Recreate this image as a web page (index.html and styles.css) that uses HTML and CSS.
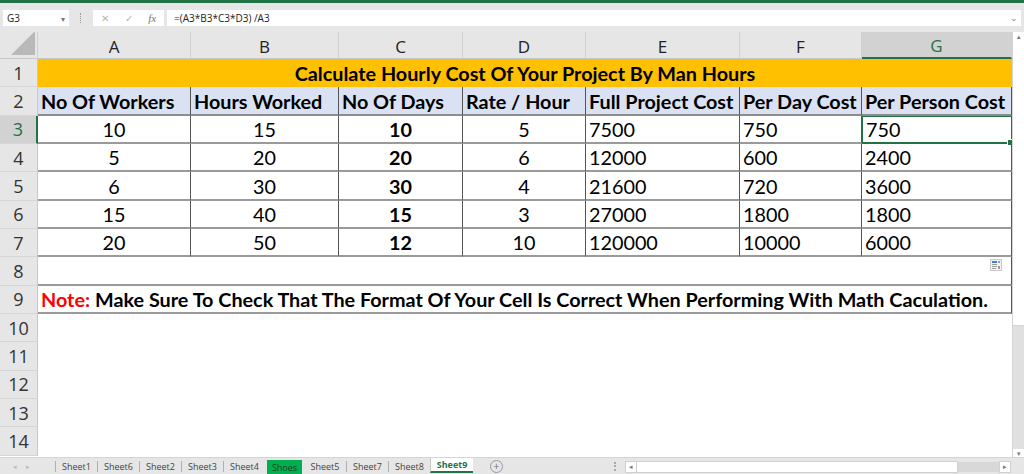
FILE: index.html
```html
<!DOCTYPE html>
<html lang="en">
<head>
  <meta charset="UTF-8" />
  <title>Sheet9 - Hourly Cost</title>
  <link rel="stylesheet" href="styles.css">
</head>
<body>
  <div class="ribbon-edge"></div>

  <div class="formula-bar">
    <div class="name-box"><span>G3</span><span class="drop">&#9662;</span></div>
    <div class="grip"></div>
    <div class="fx-buttons">
      <span class="fx-btn">&#10005;</span>
      <span class="fx-btn">&#10003;</span>
      <span class="fx-btn fx">fx</span>
    </div>
    <div class="formula-input"><span>=(A3*B3*C3*D3) /A3</span><span class="drop">&#8964;</span></div>
  </div>

  <div class="workspace">
    <div class="sheet">
      <div class="corner"><span class="tri"></span></div>
      <div class="col-head">A</div>
      <div class="col-head">B</div>
      <div class="col-head">C</div>
      <div class="col-head">D</div>
      <div class="col-head">E</div>
      <div class="col-head">F</div>
      <div class="col-head active">G</div>

      <div class="row-head">1</div>
      <div class="cell title">Calculate Hourly Cost Of Your Project By Man Hours</div>

      <div class="row-head">2</div>
      <div class="cell hdr">No Of Workers</div>
      <div class="cell hdr">Hours Worked</div>
      <div class="cell hdr">No Of Days</div>
      <div class="cell hdr">Rate / Hour</div>
      <div class="cell hdr">Full Project Cost</div>
      <div class="cell hdr">Per Day Cost</div>
      <div class="cell hdr">Per Person Cost</div>

      <div class="row-head active">3</div>
      <div class="cell num mid">10</div>
      <div class="cell num mid">15</div>
      <div class="cell num mid b">10</div>
      <div class="cell num mid">5</div>
      <div class="cell num">7500</div>
      <div class="cell num">750</div>
      <div class="cell num selected">750<span class="handle"></span></div>

      <div class="row-head">4</div>
      <div class="cell num mid">5</div>
      <div class="cell num mid">20</div>
      <div class="cell num mid b">20</div>
      <div class="cell num mid">6</div>
      <div class="cell num">12000</div>
      <div class="cell num">600</div>
      <div class="cell num">2400</div>

      <div class="row-head">5</div>
      <div class="cell num mid">6</div>
      <div class="cell num mid">30</div>
      <div class="cell num mid b">30</div>
      <div class="cell num mid">4</div>
      <div class="cell num">21600</div>
      <div class="cell num">720</div>
      <div class="cell num">3600</div>

      <div class="row-head">6</div>
      <div class="cell num mid">15</div>
      <div class="cell num mid">40</div>
      <div class="cell num mid b">15</div>
      <div class="cell num mid">3</div>
      <div class="cell num">27000</div>
      <div class="cell num">1800</div>
      <div class="cell num">1800</div>

      <div class="row-head">7</div>
      <div class="cell num mid">20</div>
      <div class="cell num mid">50</div>
      <div class="cell num mid b">12</div>
      <div class="cell num mid">10</div>
      <div class="cell num">120000</div>
      <div class="cell num">10000</div>
      <div class="cell num">6000</div>

      <div class="row-head">8</div>
      <div class="cell wide blank">
        <span class="paste-opt">
          <svg width="12" height="12" viewBox="0 0 12 12">
            <rect x="0.5" y="0.5" width="11" height="11" fill="#f4f4f4" stroke="#c8c8c8"/>
            <rect x="2" y="2" width="5" height="2" fill="#3c7fd6"/>
            <rect x="8" y="2" width="2" height="2" fill="#9a9a9a"/>
            <rect x="2" y="5" width="5" height="1" fill="#9a9a9a"/>
            <rect x="2" y="7" width="5" height="1" fill="#9a9a9a"/>
            <rect x="2" y="9" width="4" height="1" fill="#9a9a9a"/>
            <rect x="8" y="7" width="2" height="3" fill="#9a9a9a"/>
          </svg>
        </span>
      </div>

      <div class="row-head">9</div>
      <div class="cell wide note"><span class="red">Note:</span> Make Sure To Check That The Format Of Your Cell Is Correct When Performing With Math Caculation.</div>

      <div class="row-head">10</div>
      <div class="cell wide empty"></div>
      <div class="row-head">11</div>
      <div class="cell wide empty"></div>
      <div class="row-head">12</div>
      <div class="cell wide empty"></div>
      <div class="row-head">13</div>
      <div class="cell wide empty"></div>
      <div class="row-head">14</div>
      <div class="cell wide empty"></div>
    </div>

    <div class="vscroll">
      <div class="arrow up">&#9652;</div>
      <div class="thumb"></div>
      <div class="track"></div>
      <div class="arrow down">&#9662;</div>
    </div>
  </div>

  <div class="tabbar">
    <div class="tab-nav"><span>&#9666;</span><span>&#9656;</span></div>
    <div class="tabs">
      <span class="tab">Sheet1</span>
      <span class="tab">Sheet6</span>
      <span class="tab">Sheet2</span>
      <span class="tab">Sheet3</span>
      <span class="tab">Sheet4</span>
      <span class="tab green">Shoes</span>
      <span class="tab">Sheet5</span>
      <span class="tab">Sheet7</span>
      <span class="tab">Sheet8</span>
      <span class="tab current">Sheet9</span>
    </div>
    <span class="add-sheet">+</span>
    <div class="hscroll">
      <span class="hgrip"></span>
      <span class="harrow">&#9666;</span>
      <span class="hthumb"></span>
      <span class="htrack"></span>
      <span class="harrow">&#9656;</span>
    </div>
  </div>
</body>
</html>
```

FILE: styles.css
```css
body {
  margin: 0;
  width: 1024px;
  height: 474px;
  overflow: hidden;
  background: #e6e6e6;
  font-family: "Lato", "Open Sans", sans-serif;
  color: #000;
}

.ribbon-edge {
  height: 3px;
  background: #217346;
}

/* formula bar */
.formula-bar {
  display: flex;
  align-items: center;
  height: 16px;
  padding: 7px 3px 6px 3px;
  font-family: "Open Sans", sans-serif;
  font-size: 10px;
  color: #222;
}

.name-box {
  width: 66px;
  height: 16px;
  background: #fff;
  display: flex;
  align-items: center;
  justify-content: space-between;
  padding: 0 4px;
  box-sizing: border-box;
}

.name-box .drop {
  font-size: 8px;
  color: #777;
}

.grip {
  width: 1px;
  height: 10px;
  margin: 0 11px 0 11px;
  border-left: 1px dotted #999;
}

.fx-buttons {
  width: 71px;
  height: 16px;
  background: #fff;
  display: flex;
  align-items: center;
  justify-content: space-around;
  color: #b4b4b4;
  font-size: 10px;
}

.fx-buttons .fx {
  font-family: "Liberation Serif", serif;
  font-style: italic;
  color: #777;
  font-size: 11px;
}

.formula-input {
  flex: 1;
  height: 16px;
  margin-left: 3px;
  background: #fff;
  display: flex;
  align-items: center;
  justify-content: space-between;
  padding: 0 3px 0 7px;
}

.formula-input .drop {
  color: #888;
  font-size: 9px;
  line-height: 6px;
}

/* sheet grid */
.workspace {
  display: flex;
  height: 425px;
}

.sheet {
  display: grid;
  grid-template-columns: 38px 153px 148px 124px 123px 154px 122px 150px;
  grid-template-rows: 27px repeat(14, 28.35px);
  width: 1012px;
  background: #fff;
  overflow: hidden;
}

.corner {
  background: #e6e6e6;
  border-right: 1px solid #d0d0d0;
  border-bottom: 1px solid #c8c8c8;
  position: relative;
}

.corner .tri {
  position: absolute;
  right: 2px;
  bottom: 3px;
  width: 0;
  height: 0;
  border-left: 24px solid transparent;
  border-bottom: 24px solid #b9b9b9;
}

.col-head {
  background: #e6e6e6;
  border-right: 1px solid #d0d0d0;
  border-bottom: 1px solid #c8c8c8;
  display: flex;
  align-items: center;
  justify-content: center;
  font-family: "Open Sans", sans-serif;
  font-size: 17px;
  color: #222;
  padding-top: 2px;
}

.col-head.active {
  background: #d2d2d2;
  color: #217346;
  border-bottom: 2px solid #217346;
}

.row-head {
  background: #e6e6e6;
  border-right: 1px solid #c8c8c8;
  border-bottom: 1px solid #d6d6d6;
  display: flex;
  align-items: center;
  justify-content: center;
  font-family: "Open Sans", sans-serif;
  font-size: 18px;
  color: #333;
}

.row-head.active {
  background: #d2d2d2;
  color: #217346;
  border-right: 2px solid #217346;
}

.cell {
  box-sizing: border-box;
  display: flex;
  align-items: center;
  font-size: 19.8px;
  padding: 0 3px;
  white-space: nowrap;
  position: relative;
}

.title {
  grid-column: span 7;
  background: #ffc000;
  justify-content: center;
  font-weight: bold;
}

.hdr {
  background: #d9e1f2;
  font-weight: bold;
  border-right: 1px solid #555;
  border-bottom: 2px solid #8c8c8c;
}

.num {
  border-right: 1px solid #555;
  border-bottom: 2px solid #9a9a9a;
}

.mid {
  justify-content: center;
}

.b {
  font-weight: bold;
}

.selected {
  border: 1px solid #217346;
  border-bottom: 2px solid #217346;
}

.selected .handle {
  position: absolute;
  right: -3px;
  bottom: -4px;
  width: 5px;
  height: 5px;
  background: #217346;
  border: 1px solid #fff;
}

.wide {
  grid-column: span 7;
}

.blank {
  border-right: 1px solid #555;
  border-bottom: 2px solid #9a9a9a;
}

.paste-opt {
  position: absolute;
  right: 9px;
  top: 2px;
  display: flex;
}

.note {
  font-weight: bold;
  border-bottom: 2px solid #9a9a9a;
  border-right: 1px solid #555;
}

.note .red {
  color: #ff0000;
  margin-right: 5px;
}

/* vertical scrollbar */
.vscroll {
  width: 12px;
  display: flex;
  flex-direction: column;
  background: #fff;
  border-left: 1px solid #d4d4d4;
  box-sizing: border-box;
}

.vscroll .arrow {
  height: 8px;
  font-size: 7px;
  line-height: 8px;
  text-align: center;
  color: #777;
  background: #fff;
}

.vscroll .thumb {
  height: 285px;
  background: #fff;
  border-bottom: 1px solid #d4d4d4;
}

.vscroll .track {
  flex: 1;
  background: #e0e0e0;
}

/* sheet tabs */
.tabbar {
  display: flex;
  align-items: center;
  height: 17px;
  border-top: 1px solid #d4d4d4;
  font-family: "Open Sans", sans-serif;
  font-size: 9px;
  color: #444;
}

.tab-nav {
  width: 55px;
  display: flex;
  gap: 9px;
  padding-left: 13px;
  box-sizing: border-box;
  color: #bbb;
  font-size: 7px;
}

.tabs {
  display: flex;
  align-items: stretch;
  height: 17px;
}

.tab {
  display: flex;
  align-items: center;
  justify-content: center;
  width: 42px;
  box-sizing: border-box;
  border-left: 1px solid #b0b0b0;
  height: 11px;
  margin-top: 3px;
}

.tab.green {
  background: #00b050;
  color: #1b3b1b;
  height: 14px;
  margin: 2px 2px 0 2px;
  width: 35px;
  border-left: none;
}

.tab.green + .tab {
  border-left: none;
}

.tab.current {
  background: #fff;
  color: #217346;
  font-weight: bold;
  height: 15px;
  margin-top: 0;
  width: 43px;
  border-bottom: 2px solid #217346;
  border-left: 1px solid #c8c8c8;
}

.add-sheet {
  margin-left: 17px;
  width: 11px;
  height: 11px;
  border: 1px solid #999;
  border-radius: 50%;
  font-size: 11px;
  line-height: 10px;
  text-align: center;
  color: #777;
}

.hscroll {
  margin-left: auto;
  display: flex;
  align-items: center;
  height: 11px;
  width: 397px;
  margin-right: 13px;
}

.hgrip {
  width: 1px;
  height: 9px;
  border-left: 2px dotted #aaa;
  margin-right: 8px;
}

.harrow {
  width: 10px;
  height: 10px;
  background: #fff;
  border: 1px solid #d0d0d0;
  font-size: 7px;
  line-height: 10px;
  text-align: center;
  color: #777;
}

.hthumb {
  width: 320px;
  height: 10px;
  background: #fff;
  border: 1px solid #d0d0d0;
  border-left: none;
}

.htrack {
  flex: 1;
  height: 10px;
  background: #d8d8d8;
}
```
